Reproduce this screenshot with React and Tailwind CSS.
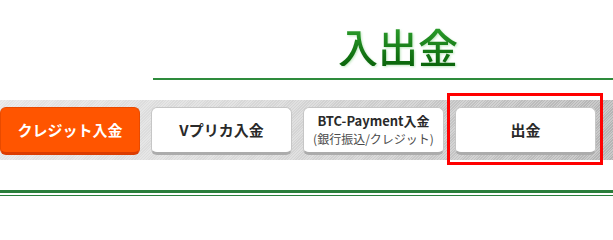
import React from 'react';

const tabs = [
  { key: 'credit', label: 'クレジット入金', active: true },
  { key: 'vpreca', label: 'Vプリカ入金' },
  { key: 'btc', label: 'BTC-Payment入金', sub: '(銀行振込/クレジット)' },
  { key: 'withdraw', label: '出金' },
];

function Tab({ tab }) {
  if (tab.active) {
    return (
      <div className="w-[140px] h-[48px] shrink-0 flex items-center justify-center rounded-[6px] bg-[#ff5500] border border-[#e84a00] border-b-[3px] border-b-[#dc3c00] text-white font-bold text-[15px]">
        {tab.label}
      </div>
    );
  }
  return (
    <div className="w-[141px] h-[48px] shrink-0 flex flex-col items-center justify-center rounded-[6px] bg-white border border-[#c6c6c6] border-b-[3px] border-b-[#acacac] text-[#2a2a2a]">
      <span className={tab.sub ? 'block font-bold text-[13px] leading-[18px]' : 'font-bold text-[15px]'}>{tab.label}</span>
      {tab.sub && <span className="block text-[12px] leading-[18px] text-[#4a4a4a]">{tab.sub}</span>}
    </div>
  );
}

export default function App() {
  return (
    <div className="w-[613px] h-[204px] bg-white overflow-hidden font-['Noto_Sans_CJK_JP',sans-serif]">
      <div className="flex justify-end pr-[155px] pt-[26px]">
        <h1 className="text-[40px] leading-[40px] font-medium bg-[linear-gradient(to_bottom,#2c9e2c,#0a640a)] bg-clip-text text-transparent drop-shadow-[1px_1px_1px_rgba(150,215,150,0.6)]">
          入出金
        </h1>
      </div>
      <div className="ml-[153px] mt-[12px] h-[2px] bg-[#2e8b3c]" />

      <div className="relative mt-[20px] h-[60px] pt-[7px] bg-[image:repeating-linear-gradient(135deg,rgba(255,255,255,0.28)_0px_1px,transparent_1px_2px),linear-gradient(to_right,#e4e4e4,#d6d6d6_45%,#b4b4b4)]">
        <div className="flex gap-[11px]">
          {tabs.map((t) => (
            <Tab key={t.key} tab={t} />
          ))}
        </div>
        <div className="absolute left-[447px] top-[-7px] w-[156px] h-[72px] border-[3px] border-[#ff0000]" />
      </div>

      <div className="mt-[30px] h-[3px] bg-[#2a7e3b]" />
      <div className="mt-[2px] h-px bg-[#2a7e3b]" />
    </div>
  );
}
